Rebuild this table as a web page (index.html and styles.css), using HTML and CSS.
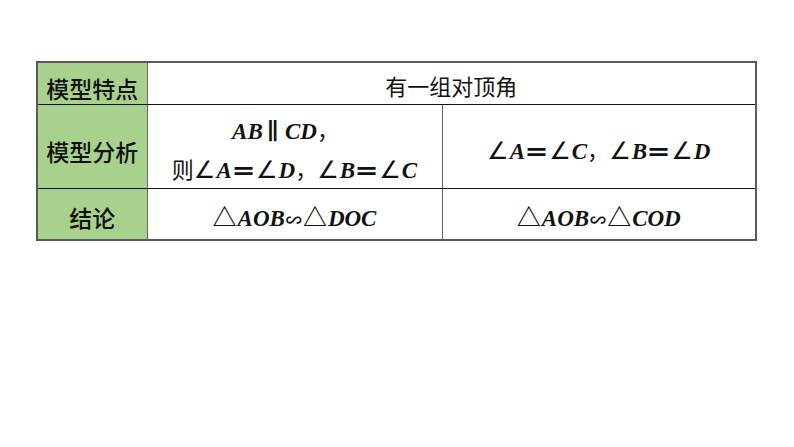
FILE: index.html
```html
<!DOCTYPE html>
<html>
<head>
<meta charset="utf-8">
<link rel="stylesheet" href="styles.css">
</head>
<body>
<div class="page">
  <table class="model">
    <colgroup>
      <col class="c1"><col class="c2"><col class="c3">
    </colgroup>
    <tr class="r1">
      <th class="label">模型特点</th>
      <td colspan="2" class="cn">有一组对顶角</td>
    </tr>
    <tr class="r2">
      <th class="label">模型分析</th>
      <td class="math">
        <div class="l1">AB<span class="par">∥</span>CD<span class="cn">，</span></div>
        <div class="l2"><span class="cn">则</span><span class="sym ang">∠</span>A<span class="sym eq">=</span><span class="sym ang">∠</span>D<span class="cn">，</span><span class="sym ang">∠</span>B<span class="sym eq">=</span><span class="sym ang">∠</span>C</div>
      </td>
      <td class="math"><span class="sym ang">∠</span>A<span class="sym eq">=</span><span class="sym ang">∠</span>C<span class="cn">，</span><span class="sym ang">∠</span>B<span class="sym eq">=</span><span class="sym ang">∠</span>D</td>
    </tr>
    <tr class="r3">
      <th class="label">结论</th>
      <td class="math"><span class="tri">△</span>AOB<span class="sim">∽</span><span class="tri">△</span>DOC</td>
      <td class="math"><span class="tri">△</span>AOB<span class="sim">∽</span><span class="tri">△</span>COD</td>
    </tr>
  </table>
</div>
</body>
</html>
```
FILE: styles.css
```css
html, body {
  margin: 0;
  padding: 0;
  background: #ffffff;
}
.page {
  padding: 61px 0 0 36px;
}
.model {
  border-collapse: collapse;
  border: 2px solid #5a5a5a;
  table-layout: fixed;
  width: 719px;
}
.c1 { width: 110px; }
.c2 { width: 295px; }
.c3 { width: 314px; }
.model th, .model td {
  padding: 0;
  text-align: center;
  border-top: 1px solid #111;
  border-bottom: 1px solid #111;
  border-left: 1px solid #666;
  border-right: 1px solid #666;
  line-height: 28px;
}
.label {
  background: #a9d18e;
  font-family: "Noto Sans CJK SC", sans-serif;
  font-weight: 500;
  font-size: 23px;
  color: #111;
  vertical-align: middle;
}
.r1 { height: 42px; }
.r2 { height: 84px; }
.r3 { height: 52px; }
.r1 .label { padding-top: 10px; }
.r1 .cn {
  font-family: "Noto Sans CJK SC", sans-serif;
  font-weight: 400;
  font-size: 22px;
  color: #111;
  vertical-align: middle;
  padding-top: 4px;
}
.r2 .label { padding-top: 10px; }
.r3 .label { padding-top: 6px; }
.math {
  font-family: "Liberation Serif", "DejaVu Serif", serif;
  font-style: italic;
  font-weight: bold;
  font-size: 23px;
  color: #111;
  vertical-align: middle;
}
.math .cn {
  font-family: "Noto Sans CJK SC", sans-serif;
  font-style: normal;
  font-weight: 400;
  font-size: 22px;
}
.sym {
  font-family: "DejaVu Sans", sans-serif;
  font-style: normal;
  font-weight: normal;
}
.ang { font-size: 24px; margin-right: 1px; }
.eq { font-weight: bold; font-size: 23px; margin: 0 3px 0 2px; display: inline-block; transform: scaleX(1.25); }
.tri {
  font-family: "Noto Sans CJK SC", sans-serif;
  font-style: normal;
  font-weight: 700;
  font-size: 24px;
  margin-right: 1px;
}
.sim {
  font-family: "Noto Sans CJK SC", sans-serif;
  font-style: normal;
  font-weight: 700;
  font-size: 16px;
  margin: 0 1px;
}
.r3 .math { padding-top: 8px; }
.r2 .math { padding-top: 8px; }
.l1 { line-height: 30px; padding-right: 18px; }
.l2 { line-height: 30px; margin-top: 6px; }
.par { font-style: normal; margin: 0 6px 0 4px; }
```
